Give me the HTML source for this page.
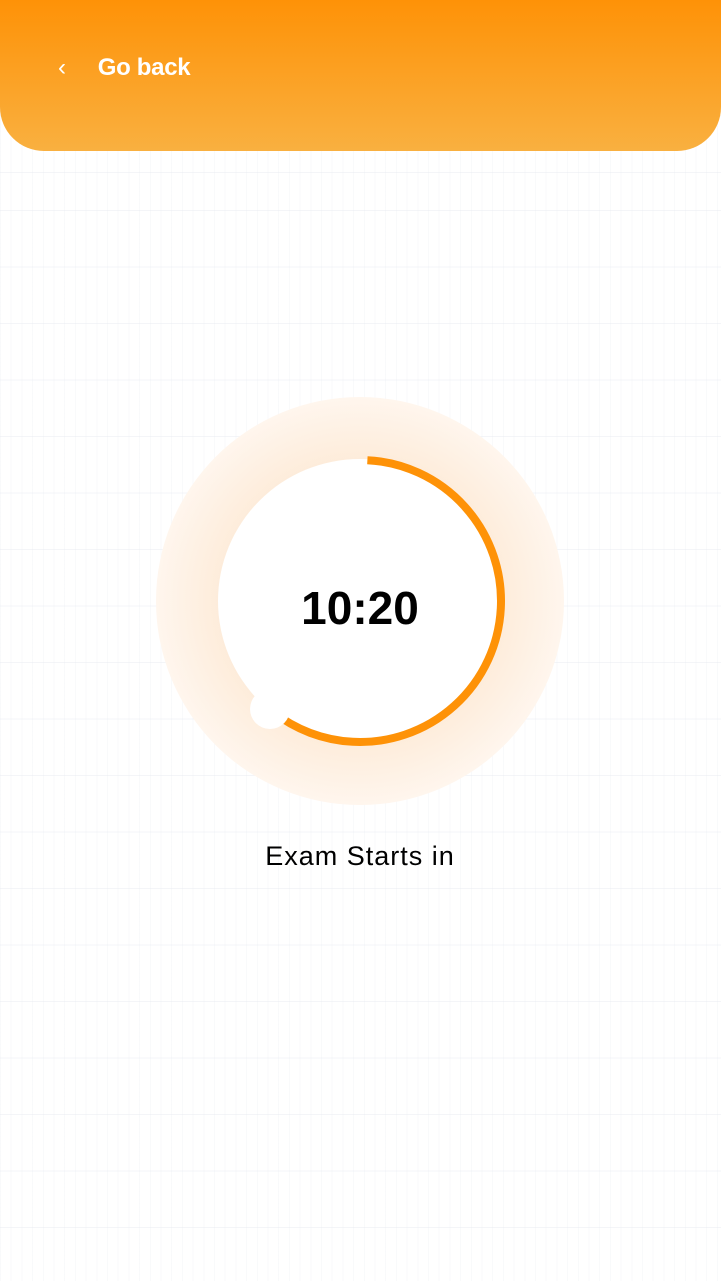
<!DOCTYPE html>
<html><head><style>
html,body{margin:0;padding:0}
body{width:721px;height:1281px;position:relative;overflow:hidden;font-family:"Liberation Sans",sans-serif;
background:#fff;
background-image:repeating-linear-gradient(90deg,rgba(230,233,240,.25) 0 1px,transparent 1px 10.7px),repeating-linear-gradient(180deg,rgba(230,233,240,.45) 0 1px,transparent 1px 56.5px);
background-position:0 0,0 210px}
.hdr{position:absolute;left:0;top:0;width:721px;height:151px;border-radius:0 0 44px 44px;background:linear-gradient(#fe9207,#f9b040)}
.back{position:absolute;left:58px;top:54px;color:#fff;font-weight:bold;font-size:24px;letter-spacing:-0.3px}
.back span{display:inline-block;margin-right:32px;font-weight:normal}
</style></head><body>
<div class="hdr"><div class="back"><span>&lsaquo;</span>Go back</div></div>
<svg style="position:absolute;left:0;top:0" width="721" height="1281">
<defs><radialGradient id="g" cx="360" cy="601" r="205" gradientUnits="userSpaceOnUse">
<stop offset="0.65" stop-color="#fdebd8"/><stop offset="1" stop-color="#fff6ee"/></radialGradient></defs>
<circle cx="360" cy="601" r="204" fill="url(#g)"/>
<circle cx="360" cy="601" r="142" fill="#fff"/>
<circle cx="360" cy="601" r="141" fill="none" stroke="#fe9207" stroke-width="8" stroke-dasharray="530 1000" transform="rotate(-87 360 601)"/>
<circle cx="270" cy="709" r="20" fill="#fff"/>
<text x="360" y="624" text-anchor="middle" font-family="Liberation Sans,sans-serif" font-weight="bold" font-size="46" fill="#000">10:20</text>
<text x="360" y="865" text-anchor="middle" font-family="Liberation Sans,sans-serif" font-size="27" letter-spacing="1" fill="#000">Exam Starts in</text>
</svg>
</body></html>
